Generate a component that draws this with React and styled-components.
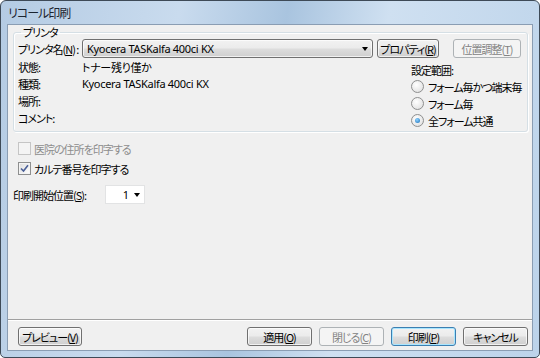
import React from 'react'
import styled, { createGlobalStyle, css } from 'styled-components'

const GlobalStyle = createGlobalStyle`
  html, body { margin: 0; padding: 0; background: #fff; }
  body {
    font-family: "Noto Sans", "Noto Sans CJK JP", sans-serif;
    font-size: 11px;
    color: #000;
  }
  * { box-sizing: border-box; }
`;

const jp = css`
  font-family: "Noto Sans CJK JP", sans-serif;
  font-feature-settings: "palt";
  letter-spacing: -1px;
  white-space: nowrap;
`;

const Window = styled.div`
  width: 540px;
  height: 358px;
  display: flex;
  flex-direction: column;
  border: 1px solid #3e4a57;
  border-radius: 6px 6px 5px 5px;
  background: linear-gradient(100deg, #b4cbe3 0%, #c9dbee 30%, #a9c4df 48%, #cfe0f1 65%, #bcd3ea 100%);
  overflow: hidden;
`;

const TitleBar = styled.div`
  ${jp};
  height: 23px;
  display: flex;
  align-items: center;
  padding-left: 7px;
  font-size: 12px;
  color: #1b2430;
`;

const Client = styled.div`
  flex: 1;
  margin: 0 6px 6px 6px;
  background: #f0f0f0;
  border: 1px solid #8a9db3;
  display: flex;
  flex-direction: column;
  padding: 0 4px 4px 5px;
`;

const Group = styled.fieldset`
  margin: 1px 0 0 0;
  padding: 1px 4px 2px 4px;
  border: 1px solid #d5dfe5;
  border-radius: 3px;
  box-shadow: inset 1px 1px 0 #fff, 1px 1px 0 #fff;
`;

const Legend = styled.legend`
  ${jp};
  padding: 0 2px;
  margin-left: 3px;
  line-height: 12px;
`;

const Row = styled.div`
  display: flex;
  align-items: center;
`;

const Label = styled.span`
  ${jp};
  width: ${p => p.$w || 64}px;
  flex: none;
  color: ${p => (p.$disabled ? '#8d8d8d' : '#000')};
`;

const buttonLook = css`
  ${jp};
  height: 19px;
  border: 1px solid #707070;
  border-radius: 3px;
  background: linear-gradient(#f2f2f2 0%, #ebebeb 48%, #dddddd 52%, #cfcfcf 100%);
  box-shadow: inset 0 0 0 1px rgba(255, 255, 255, 0.7);
  font-size: 11px;
  color: #000;
  padding: 0;
  display: flex;
  align-items: center;
  justify-content: center;
`;

const Button = styled.button`
  ${buttonLook};
  width: ${p => p.$w || 65}px;
  margin-left: ${p => p.$ml || 0}px;
  ${p => p.$default && css`
    border-color: #3c7fb1;
    box-shadow: inset 0 0 0 1px #a9e6ff;
  `}
  ${p => p.disabled && css`
    border-color: #adb2b5;
    background: #f4f4f4;
    box-shadow: none;
    color: #838383;
  `}
`;

const Combo = styled.div`
  ${buttonLook};
  width: ${p => p.$w}px;
  justify-content: space-between;
  padding: 0 4px 0 4px;
  font-family: "Noto Sans", sans-serif;
  letter-spacing: -0.3px;
`;

const Arrow = styled.span`
  width: 0;
  height: 0;
  border-left: 3.5px solid transparent;
  border-right: 3.5px solid transparent;
  border-top: 4px solid #000;
  margin-top: 1px;
`;

const Details = styled.div`
  display: flex;
  margin-top: 0;
`;

const InfoList = styled.div`
  flex: 1;
  display: grid;
  grid-template-columns: 64px 1fr;
  grid-auto-rows: 17px;
  align-items: center;
`;

const Value = styled.span`
  font-family: "Noto Sans", "Noto Sans CJK JP", sans-serif;
  font-feature-settings: "palt";
  letter-spacing: -0.3px;
  white-space: nowrap;
`;

const Scope = styled.div`
  width: 112px;
  margin-top: 3px;
  display: grid;
  grid-auto-rows: 17px;
  align-items: center;
`;

const RadioRow = styled.label`
  ${jp};
  display: flex;
  align-items: center;
  gap: 4px;
`;

const RadioDot = styled.span`
  width: 13px;
  height: 13px;
  flex: none;
  border-radius: 50%;
  border: 1px solid #8e8f8f;
  background: radial-gradient(circle at 40% 35%, #fff 0%, #e6e6e6 70%, #cfcfcf 100%);
  display: flex;
  align-items: center;
  justify-content: center;
  &::after {
    content: '';
    width: 5px;
    height: 5px;
    border-radius: 50%;
    background: ${p => (p.$on ? 'radial-gradient(circle at 40% 35%, #8fd3ff, #1a6fb8)' : 'transparent')};
  }
`;

const Options = styled.div`
  display: flex;
  flex-direction: column;
  padding-left: 5px;
  margin-top: 10px;
  gap: 7px;
`;

const CheckRow = styled.label`
  ${jp};
  display: flex;
  align-items: center;
  gap: 3px;
  height: 13px;
  color: ${p => (p.$disabled ? '#8d8d8d' : '#000')};
`;

const CheckBox = styled.span`
  width: 13px;
  height: 13px;
  flex: none;
  border: 1px solid ${p => (p.$disabled ? '#c5c5c5' : '#8e8f8f')};
  background: ${p => (p.$disabled ? '#f4f4f4' : 'linear-gradient(135deg, #dcdcdc, #ffffff)')};
  box-shadow: inset 0 0 0 1px #f4f4f4;
  display: flex;
  align-items: center;
  justify-content: center;
`;

const StartRow = styled(Row)`
  margin-top: 10px;
`;

const SmallCombo = styled.div`
  width: 40px;
  height: 19px;
  background: #fff;
  border: 1px solid #e2e3e4;
  display: flex;
  align-items: center;
  justify-content: flex-end;
  gap: 5px;
  padding-right: 4px;
  font-family: "Noto Sans", sans-serif;
`;

const Spacer = styled.div`
  flex: 1;
`;

const Separator = styled.div`
  height: 2px;
  margin: 0 -4px 6px -5px;
  border-top: 1px solid #a0a0a0;
  border-bottom: 1px solid #fff;
`;

const Footer = styled.div`
  display: flex;
  align-items: center;
  padding-left: 5px;
  gap: 7px;
`;

const Check = () => (
  <svg width="9" height="9" viewBox="0 0 9 9">
    <path d="M1 4.5 L3.5 7 L8 1.2" fill="none" stroke="#4a5f97" strokeWidth="1.6" />
  </svg>
);

const App = () => (
  <>
    <GlobalStyle />
    <Window>
      <TitleBar>リコール印刷</TitleBar>
      <Client>
        <Group>
          <Legend>プリンタ</Legend>
          <Row>
            <Label>プリンタ名(<u>N</u>) :</Label>
            <Combo $w={291}>
              <span>Kyocera TASKalfa 400ci KX</span>
              <Arrow />
            </Combo>
            <Button $w={62} $ml={4}>プロパティ(<u>R</u>)</Button>
            <Button $w={68} $ml={14} disabled>位置調整(<u>T</u>)</Button>
          </Row>
          <Details>
            <InfoList>
              <Label>状態:</Label>
              <Value>トナー残り僅か</Value>
              <Label>種類:</Label>
              <Value>Kyocera TASKalfa 400ci KX</Value>
              <Label>場所:</Label>
              <Value />
              <Label>コメント:</Label>
              <Value />
            </InfoList>
            <Scope>
              <Label>設定範囲:</Label>
              <RadioRow><RadioDot />フォーム毎かつ端末毎</RadioRow>
              <RadioRow><RadioDot />フォーム毎</RadioRow>
              <RadioRow><RadioDot $on />全フォーム共通</RadioRow>
            </Scope>
          </Details>
        </Group>
        <Options>
          <CheckRow $disabled><CheckBox $disabled />医院の住所を印字する</CheckRow>
          <CheckRow><CheckBox><Check /></CheckBox>カルテ番号を印字する</CheckRow>
        </Options>
        <StartRow>
          <Label $w={92}>印刷開始位置(<u>S</u>):</Label>
          <SmallCombo>
            <span>1</span>
            <Arrow />
          </SmallCombo>
        </StartRow>
        <Spacer />
        <Separator />
        <Footer>
          <Button $w={64}>プレビュー(<u>V</u>)</Button>
          <Spacer />
          <Button>適用(<u>O</u>)</Button>
          <Button disabled>閉じる(<u>C</u>)</Button>
          <Button $default>印刷(<u>P</u>)</Button>
          <Button>キャンセル</Button>
        </Footer>
      </Client>
    </Window>
  </>
)

export default App
